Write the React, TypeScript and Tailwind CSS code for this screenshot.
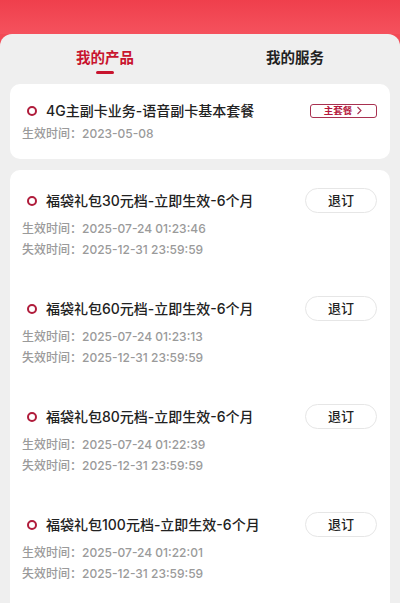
import React from "react";

const FONT = { fontFamily: '"Inter", "Noto Sans CJK SC", "Noto Sans", sans-serif' };

type Item = { name: string; start: string; end: string };

const items: Item[] = [
  { name: "福袋礼包30元档-立即生效-6个月", start: "2025-07-24 01:23:46", end: "2025-12-31 23:59:59" },
  { name: "福袋礼包60元档-立即生效-6个月", start: "2025-07-24 01:23:13", end: "2025-12-31 23:59:59" },
  { name: "福袋礼包80元档-立即生效-6个月", start: "2025-07-24 01:22:39", end: "2025-12-31 23:59:59" },
  { name: "福袋礼包100元档-立即生效-6个月", start: "2025-07-24 01:22:01", end: "2025-12-31 23:59:59" },
];

function Dot() {
  return <span className="w-[10px] h-[10px] rounded-full border-[2.5px] border-[#b01c3b] shrink-0 ml-[5px] mr-[9px]" />;
}

export default function App() {
  return (
    <div style={FONT} className="w-[400px] h-[603px] overflow-hidden bg-[#f24a55]">
      <div className="h-[34px] bg-gradient-to-b from-[#ef3f4c] to-[#f5515d]" />
      <div className="bg-[#efefef] rounded-t-[12px] px-[10px] h-[569px]">
        <div className="flex h-[50px]">
          <div className="flex-1 flex flex-col items-center pt-[12px]">
            <span className="text-[14.5px] leading-[24px] font-bold text-[#c8142e]">我的产品</span>
            <span className="mt-[1px] w-[18px] h-[3px] rounded-full bg-[#c8142e]" />
          </div>
          <div className="flex-1 flex flex-col items-center pt-[12px]">
            <span className="text-[14.5px] leading-[24px] font-bold text-[#222]">我的服务</span>
          </div>
        </div>
        <div className="bg-white rounded-[10px] pt-[14px] pb-[15px] pl-[12px] pr-[13px]">
          <div className="flex items-center h-[25px]">
            <Dot />
            <span className="flex-1 text-[14px] font-medium text-[#222]">4G主副卡业务-语音副卡基本套餐</span>
            <span className="flex items-center justify-center w-[67px] h-[14px] rounded-[3px] border-[1.5px] border-[#a83150] text-[9.5px] leading-none font-bold text-[#b5183c]">
              主套餐
              <svg width="7" height="9" viewBox="0 0 7 9" className="ml-[4px]">
                <path d="M1.5 1 L5 4.5 L1.5 8" fill="none" stroke="#a83150" strokeWidth="1.1" />
              </svg>
            </span>
          </div>
          <div className="mt-[1px] text-[12px] leading-[20px] font-medium text-[#9a9a9a]">生效时间：2023-05-08</div>
        </div>
        <div className="mt-[11px] bg-white rounded-[10px] pt-[18px] pb-[40px] pl-[12px] pr-[13px] flex flex-col gap-[36px]">
          {items.map((it) => (
            <div key={it.name}>
              <div className="flex items-center h-[25px]">
                <Dot />
                <span className="flex-1 text-[14px] font-medium text-[#222]">{it.name}</span>
                <button className="w-[72px] h-[25px] rounded-full border border-[#e6e6e6] text-[13px] font-medium text-[#222] flex items-center justify-center">
                  退订
                </button>
              </div>
              <div className="mt-[5px] text-[12px] leading-[21px] font-medium text-[#9a9a9a]">生效时间：{it.start}</div>
              <div className="text-[12px] leading-[21px] font-medium text-[#9a9a9a]">失效时间：{it.end}</div>
            </div>
          ))}
        </div>
      </div>
    </div>
  );
}
